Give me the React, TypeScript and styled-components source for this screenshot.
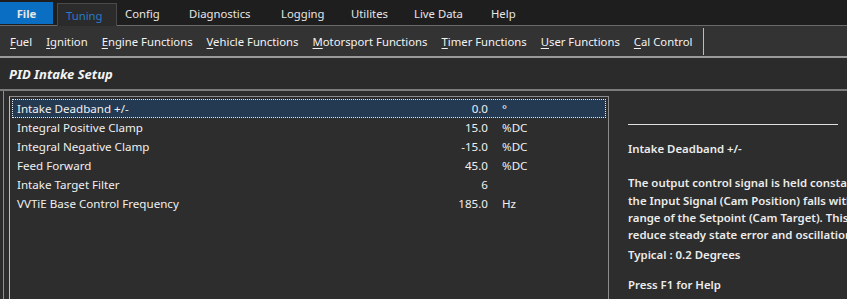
import React from "react";
import styled, { createGlobalStyle } from "styled-components";

const GlobalStyle = createGlobalStyle`
  html, body { margin: 0; padding: 0; background: #2b2b2b; }
  body { font-family: "Noto Sans", "Open Sans", sans-serif; color: #f0f0f0; }
  * { box-sizing: border-box; }
`;

const Page = styled.div`
  width: 847px;
  height: 299px;
  overflow: hidden;
  display: flex;
  flex-direction: column;
  background: #2b2b2b;
`;

const TabBar = styled.div`
  flex-shrink: 0;
  height: 26px;
  display: flex;
  align-items: flex-end;
  background: #1e1e1e;
  border-bottom: 1px solid #6a6a6a;
  padding-top: 2px;
`;

const Tab = styled.div<{ $w: number; $variant?: "file" | "active" }>`
  width: ${(p) => p.$w}px;
  height: ${(p) => (p.$variant === "file" ? "22px" : "23px")};
  align-self: ${(p) => (p.$variant === "file" ? "flex-start" : "flex-end")};
  margin-right: ${(p) => (p.$variant === "file" ? "4px" : "0")};
  display: flex;
  align-items: center;
  justify-content: ${(p) => (p.$variant === "file" ? "center" : "flex-start")};
  padding-left: ${(p) => (p.$variant === "file" ? "0" : "8px")};
  font-size: 11.3px;
  font-weight: ${(p) => (p.$variant === "file" ? 700 : 400)};
  color: ${(p) => (p.$variant === "active" ? "#2a78c8" : "#e6e6e6")};
  background: ${(p) =>
    p.$variant === "file" ? "#0a6fc2" : p.$variant === "active" ? "#2b2b2b" : "transparent"};
  border: ${(p) => (p.$variant === "active" ? "1px solid #4a4a4a" : "none")};
  border-bottom: none;
  margin-bottom: ${(p) => (p.$variant === "active" ? "-1px" : "0")};
`;

const MenuBar = styled.div`
  flex-shrink: 0;
  height: 32px;
  display: flex;
  align-items: center;
  background: #333333;
  border-bottom: 2px solid #9a9a9a;
  padding-left: 10px;
  gap: 14px;
`;

const MenuItem = styled.span`
  font-size: 11.3px;
  color: #f2f2f2;
  white-space: nowrap;
  u { text-decoration: underline; text-underline-offset: 2px; }
`;

const MenuSep = styled.div`
  width: 1px;
  height: 27px;
  background: #bdbdbd;
  margin-left: -3px;
`;

const TitleBar = styled.div`
  flex-shrink: 0;
  height: 33px;
  display: flex;
  align-items: center;
  padding-left: 9px;
  background: #2b2b2b;
  border-bottom: 2px solid #7c7c7c;
  font-size: 13px;
  font-weight: 700;
  font-style: italic;
  color: #f4f4f4;
`;

const Content = styled.div`
  flex: 1;
  min-height: 0;
  display: flex;
  margin-left: 3px;
  border-left: 1px solid #8f8f8f;
  background: #2d2d2d;
  padding-top: 5px;
`;

const ListBox = styled.div`
  width: 600px;
  flex-shrink: 0;
  margin-left: 5px;
  border: 1px solid #8c8c8c;
  border-bottom: none;
  border-left: 1px solid #bdbdbd;
  padding: 2px 2px 0 2px;
`;

const Row = styled.div<{ $selected?: boolean }>`
  height: 19px;
  display: grid;
  grid-template-columns: 403px 68px 1fr;
  align-items: center;
  padding-left: 4px;
  font-size: 11.6px;
  color: #f0f0f0;
  background: ${(p) => (p.$selected ? "#243a52" : "transparent")};
  border: 1px dotted ${(p) => (p.$selected ? "#e8e8e8" : "transparent")};
`;

const Value = styled.span`
  text-align: right;
`;

const Unit = styled.span`
  padding-left: 14px;
`;

const HelpPanel = styled.div`
  flex: 1;
  min-width: 0;
  padding: 28px 0 0 19px;
  display: flex;
  flex-direction: column;
  font-size: 11.4px;
  font-weight: 600;
  color: #ececec;
  white-space: nowrap;
  overflow: hidden;
`;

const HelpRule = styled.div`
  width: 210px;
  height: 1px;
  flex-shrink: 0;
  background: #e0e0e0;
  margin-bottom: 15px;
`;

const HelpPara = styled.div<{ $gap?: number }>`
  line-height: 17.3px;
  flex-shrink: 0;
  margin-bottom: ${(p) => p.$gap ?? 12}px;
`;

const tabs = [
  { label: "Tuning", w: 60, variant: "active" as const },
  { label: "Config", w: 64 },
  { label: "Diagnostics", w: 92 },
  { label: "Logging", w: 70 },
  { label: "Utilites", w: 63 },
  { label: "Live Data", w: 77 },
  { label: "Help", w: 50 },
];

const menus = [
  "Fuel",
  "Ignition",
  "Engine Functions",
  "Vehicle Functions",
  "Motorsport Functions",
  "Timer Functions",
  "User Functions",
  "Cal Control",
];

const rows = [
  { label: "Intake Deadband +/-", value: "0.0", unit: "°" },
  { label: "Integral Positive Clamp", value: "15.0", unit: "%DC" },
  { label: "Integral Negative Clamp", value: "-15.0", unit: "%DC" },
  { label: "Feed Forward", value: "45.0", unit: "%DC" },
  { label: "Intake Target Filter", value: "6", unit: "" },
  { label: "VVTiE Base Control Frequency", value: "185.0", unit: "Hz" },
];

export default function App() {
  return (
    <Page>
      <GlobalStyle />
      <TabBar>
        <Tab $w={53} $variant="file">File</Tab>
        {tabs.map((t) => (
          <Tab key={t.label} $w={t.w} $variant={t.variant}>
            {t.label}
          </Tab>
        ))}
      </TabBar>
      <MenuBar>
        {menus.map((m) => (
          <MenuItem key={m}>
            <u>{m[0]}</u>
            {m.slice(1)}
          </MenuItem>
        ))}
        <MenuSep />
      </MenuBar>
      <TitleBar>PID Intake Setup</TitleBar>
      <Content>
        <ListBox>
          {rows.map((r, i) => (
            <Row key={r.label} $selected={i === 0}>
              <span>{r.label}</span>
              <Value>{r.value}</Value>
              <Unit>{r.unit}</Unit>
            </Row>
          ))}
        </ListBox>
        <HelpPanel>
          <HelpRule />
          <HelpPara $gap={17}>Intake Deadband +/-</HelpPara>
          <HelpPara $gap={3}>
            The output control signal is held constant when
            <br />
            the Input Signal (Cam Position) falls within this
            <br />
            range of the Setpoint (Cam Target). This helps
            <br />
            reduce steady state error and oscillations.
          </HelpPara>
          <HelpPara>Typical : 0.2 Degrees</HelpPara>
          <HelpPara>Press F1 for Help</HelpPara>
        </HelpPanel>
      </Content>
    </Page>
  );
}
